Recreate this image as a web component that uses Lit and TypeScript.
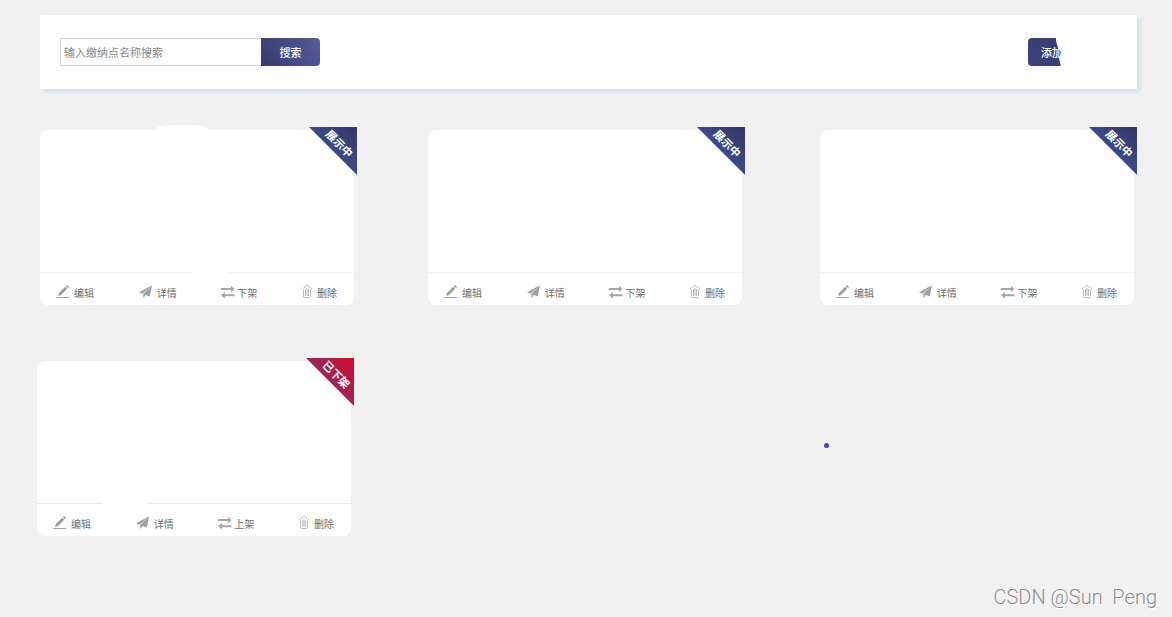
import { LitElement, html, css, svg } from "lit";
import { customElement, property } from "lit/decorators.js";

interface Point {
  online: boolean;
  mark?: string;
}

const icons = {
  edit: svg`<path d="M0 12.5h13" stroke="#a0a0a0" fill="none"/><path d="M2 11l1-3 6.200-6.200 2 2L5 10zM9.900 1.200l.7-.7c.3-.3.7-.3 1 0l1 1c.3.3.3.7 0 1l-.7.7z" fill="#9a9a9a"/>`,
  send: svg`<path d="M13 .3L0 7.300l3.500 1.400zM13 .3L4.300 9l.1 4 2.200-2.900zM13 .3L6.200 9.700l4.600 1.900z" fill="#a0a0a0"/>`,
  swap: svg`<path d="M0 3h10V.8L13.500 4 10 7.200V5H0zM13.500 9.200H4V7L0 10.200l4 3.200v-2.200h9.500z" fill="#a6a6a6"/>`,
  trash: svg`<path d="M.5 2.500v1l1 1v6.800c0 .7.4 1.200 1.200 1.200h4.600c.8 0 1.200-.5 1.200-1.200V4.500l1-1v-1M2.500 3c0-3.300 5-3.300 5 0M3.500 4v7M5 3v8M6.500 4v7" stroke="#aaa" stroke-width=".8" fill="none"/>`,
};

@customElement("point-card")
export class PointCard extends LitElement {
  @property({ type: Boolean, reflect: true }) online = false;
  @property({ reflect: true }) mark = "";

  static styles = css`
    :host {
      display: block;
      position: relative;
      width: 100%;
      max-width: 314px;
      background: #fff;
      border-radius: 8px;
    }
    .body {
      min-height: 142px;
    }
    .ribbon {
      position: absolute;
      top: -3px;
      right: -3px;
      width: 48px;
      height: 48px;
      clip-path: polygon(0 0, 100% 0, 100% 100%);
      background: linear-gradient(45deg, #405298 30%, #333663);
      color: #fff;
      font-size: 11px;
      font-weight: 700;
      line-height: 14px;
    }
    :host(:not([online])) .ribbon {
      background: linear-gradient(45deg, #85306a 30%, #d60a28);
    }
    .ribbon span {
      position: absolute;
      top: 9px;
      left: 11px;
      width: 40px;
      text-align: center;
      transform: rotate(45deg);
    }
    .actions {
      display: flex;
      justify-content: space-between;
      height: 32px;
      padding: 0 17px 0 16px;
      border-top: 1px solid #f3f5f5;
    }
    :host(:not([online])) .actions {
      border-top-color: #dcebee;
    }
    .action {
      display: flex;
      align-items: flex-start;
      gap: 5px;
      padding: 12px 0 0;
      border: 0;
      background: none;
      color: #6c6c6c;
      font: 10px/16px "Noto Sans CJK SC", sans-serif;
      cursor: pointer;
    }
    .action.tight {
      gap: 2px;
    }
    .action svg {
      display: block;
      flex: none;
    }
    .bump,
    .gap {
      position: absolute;
      background: #fff;
    }
    .bump {
      top: -5px;
      left: 114px;
      width: 56px;
      height: 10px;
      border-radius: 20px 20px 0 0 / 6px 6px 0 0;
    }
    .gap {
      top: 141px;
      height: 3px;
    }
    .gap.upper {
      left: 153px;
      width: 34px;
    }
    .gap.lower {
      left: 65px;
      width: 46px;
    }
  `;

  private action(label: string, icon: unknown, w: number, tight = false) {
    return html`<button type="button" class="action ${tight ? "tight" : ""}">
      <svg width=${w} height="14" viewBox="0 0 ${w} 14" aria-hidden="true">${icon}</svg
      ><span>${label}</span>
    </button>`;
  }

  render() {
    return html`
      <div class="body"></div>
      ${this.mark === "upper" ? html`<div class="bump"></div>` : ""}
      <div class="ribbon"><span>${this.online ? "展示中" : "已下架"}</span></div>
      <div class="actions">
        ${this.action("编辑", icons.edit, 13)} ${this.action("详情", icons.send, 13)}
        ${this.action(this.online ? "下架" : "上架", icons.swap, 14, true)}
        ${this.action("删除", icons.trash, 10)}
      </div>
      ${this.mark ? html`<div class="gap ${this.mark}"></div>` : ""}
    `;
  }
}

@customElement("app-root")
export class AppRoot extends LitElement {
  static styles = css`
    :host {
      display: block;
      position: relative;
      box-sizing: border-box;
      min-height: 100vh;
      padding: 15px 35px 15px 40px;
      overflow: hidden;
      background: #f1f1f1;
      font-family: "Noto Sans CJK SC", sans-serif;
    }
    .toolbar {
      display: flex;
      align-items: center;
      justify-content: space-between;
      height: 74px;
      padding: 0 20px;
      background: #fff;
      box-shadow: 3px 3px 4px #c4e4ed;
    }
    .search {
      display: flex;
      height: 28px;
    }
    .search input {
      box-sizing: border-box;
      width: 201px;
      padding: 0 3px;
      border: 1px solid #d0d0d0;
      border-right: 0;
      border-radius: 0;
      outline: 0;
      color: #333;
      font: 11px/16px "Noto Sans CJK SC", sans-serif;
    }
    .search input::placeholder {
      color: #888;
      opacity: 1;
    }
    .primary {
      height: 28px;
      padding: 0;
      border: 0;
      color: #fff;
      font: 500 11px/16px "Noto Sans CJK SC", sans-serif;
      cursor: pointer;
    }
    .find {
      width: 59px;
      border-radius: 0 4px 4px 0;
      background: linear-gradient(60deg, #353a6b, #565c9e);
    }
    .add {
      position: relative;
      width: 89px;
      padding-left: 13px;
      border-radius: 4px;
      background: linear-gradient(60deg, #3a4179, #353a6b);
      text-align: left;
    }
    .add::after {
      content: "";
      position: absolute;
      inset: -1px -1px -1px 28px;
      background: #fff;
      clip-path: polygon(0 0, 100% 0, 100% 100%, 5px 100%, 3px 21px, 5px 15px, 2px 11px, 0 4px);
    }
    .grid {
      display: grid;
      grid-template-columns: 388fr 392fr 317fr;
      margin-top: 41px;
    }
    .grid.removed {
      margin-top: 56px;
      margin-left: -3px;
    }
    .pointer {
      position: absolute;
      top: 443px;
      left: 824px;
      width: 5px;
      height: 5px;
      border-radius: 50%;
      background: #4046c4;
    }
    .watermark {
      position: absolute;
      right: 15px;
      bottom: 8px;
      color: #8c8c8c;
      font: 300 20px/24px Roboto, sans-serif;
      white-space: pre;
      text-shadow: 1px 1px 0 #fff;
    }
  `;

  private online: Point[] = [
    { online: true, mark: "upper" },
    { online: true },
    { online: true },
  ];
  private removed: Point[] = [{ online: false, mark: "lower" }];

  private cards(points: Point[]) {
    return points.map(
      (p) => html`<point-card ?online=${p.online} mark=${p.mark ?? ""}></point-card>`
    );
  }

  render() {
    return html`
      <header class="toolbar">
        <form class="search" @submit=${(e: Event) => e.preventDefault()}>
          <input type="text" aria-label="输入缴纳点名称搜索" placeholder="输入缴纳点名称搜索" />
          <button class="primary find">搜索</button>
        </form>
        <button type="button" class="primary add">添加</button>
      </header>
      <main>
        <section class="grid">${this.cards(this.online)}</section>
        <section class="grid removed">${this.cards(this.removed)}</section>
      </main>
      <div class="pointer"></div>
      <div class="watermark">CSDN @Sun  Peng</div>
    `;
  }
}
